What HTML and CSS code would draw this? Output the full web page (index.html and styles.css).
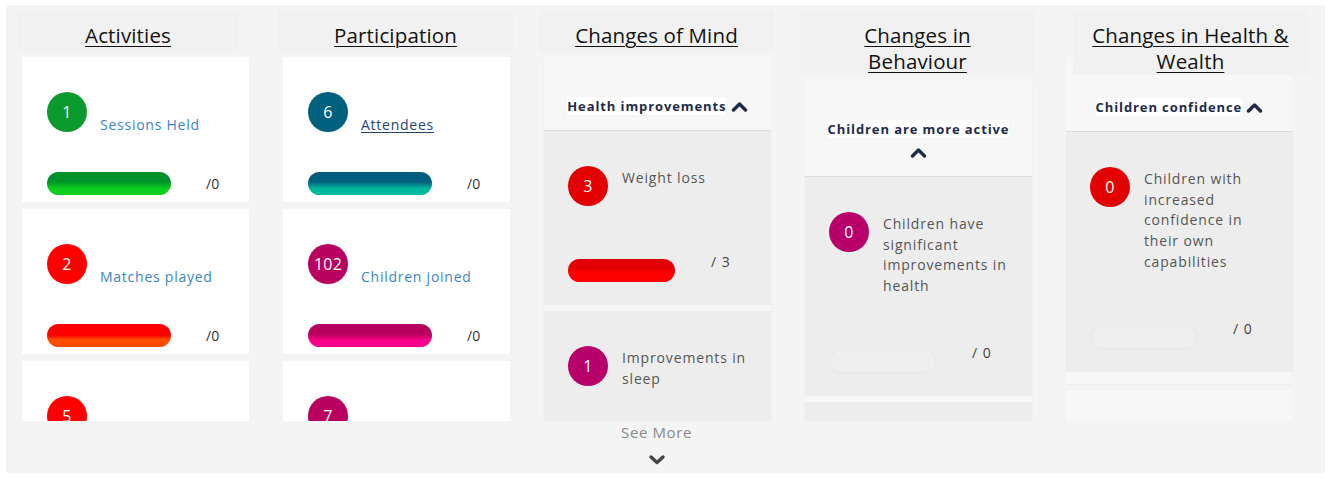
FILE: index.html
```html
<!DOCTYPE html>
<html lang="en">
<head>
<meta charset="utf-8">
<title>Outcomes dashboard</title>
<link rel="stylesheet" href="styles.css">
</head>
<body>
<div class="panel">
  <div class="board">

    <section class="col">
      <h2 class="col-title title-narrow"><a href="#">Activities</a></h2>
      <div class="col-body">
        <div class="stat-card">
          <div class="stat-head"><span class="badge c-green">1</span><span class="stat-label">Sessions Held</span></div>
          <div class="stat-foot"><span class="bar bar-green"></span><span class="ratio">/0</span></div>
        </div>
        <div class="stat-card">
          <div class="stat-head"><span class="badge c-red">2</span><span class="stat-label">Matches played</span></div>
          <div class="stat-foot"><span class="bar bar-red"></span><span class="ratio">/0</span></div>
        </div>
        <div class="stat-card">
          <div class="stat-head"><span class="badge c-red">5</span><span class="stat-label"></span></div>
        </div>
      </div>
    </section>

    <section class="col">
      <h2 class="col-title"><a href="#">Participation</a></h2>
      <div class="col-body">
        <div class="stat-card">
          <div class="stat-head"><span class="badge c-teal">6</span><a href="#" class="stat-label stat-link">Attendees</a></div>
          <div class="stat-foot"><span class="bar bar-teal"></span><span class="ratio">/0</span></div>
        </div>
        <div class="stat-card">
          <div class="stat-head"><span class="badge c-magenta">102</span><span class="stat-label">Children joined</span></div>
          <div class="stat-foot"><span class="bar bar-magenta"></span><span class="ratio">/0</span></div>
        </div>
        <div class="stat-card">
          <div class="stat-head"><span class="badge c-magenta">7</span><span class="stat-label"></span></div>
        </div>
      </div>
    </section>

    <section class="col">
      <h2 class="col-title"><a href="#">Changes of Mind</a></h2>
      <div class="col-body">
        <div class="group">
          <div class="group-head"><span class="hl">Health improvements</span> <svg class="chev" width="17" height="11" viewBox="0 0 17 11"><polyline points="2.5,9 8.5,3 14.5,9" fill="none" stroke="currentColor" stroke-width="3.4" stroke-linecap="round" stroke-linejoin="round"/></svg></div>
          <div class="item">
            <div class="item-head"><span class="badge c-crimson">3</span><span class="item-text">Weight loss</span></div>
            <div class="item-foot"><span class="bar bar-crimson"></span><span class="ratio spaced">/ 3</span></div>
          </div>
          <div class="item">
            <div class="item-head"><span class="badge c-plum">1</span><span class="item-text">Improvements in sleep</span></div>
            <div class="item-foot"><span class="bar bar-empty"></span><span class="ratio spaced">/ 0</span></div>
          </div>
        </div>
      </div>
    </section>

    <section class="col">
      <h2 class="col-title title-wrap"><a href="#">Changes in Behaviour</a></h2>
      <div class="col-body">
        <div class="group">
          <div class="group-head"><span class="hl">Children are more active</span> <svg class="chev" width="17" height="11" viewBox="0 0 17 11"><polyline points="2.5,9 8.5,3 14.5,9" fill="none" stroke="currentColor" stroke-width="3.4" stroke-linecap="round" stroke-linejoin="round"/></svg></div>
          <div class="item">
            <div class="item-head"><span class="badge c-plum">0</span><span class="item-text">Children have significant improvements in health</span></div>
            <div class="item-foot"><span class="bar bar-empty"></span><span class="ratio spaced">/ 0</span></div>
          </div>
          <div class="item">
            <div class="item-head"><span class="badge c-plum">0</span><span class="item-text"></span></div>
          </div>
        </div>
      </div>
    </section>

    <section class="col col-last">
      <h2 class="col-title title-shift"><a href="#">Changes in Health &amp; Wealth</a></h2>
      <div class="col-body body-raised">
        <div class="group">
          <div class="group-head"><span class="hl">Children confidence</span> <svg class="chev" width="17" height="11" viewBox="0 0 17 11"><polyline points="2.5,9 8.5,3 14.5,9" fill="none" stroke="currentColor" stroke-width="3.4" stroke-linecap="round" stroke-linejoin="round"/></svg></div>
          <div class="item">
            <div class="item-head"><span class="badge c-crimson">0</span><span class="item-text">Children with increased confidence in their own capabilities</span></div>
            <div class="item-foot"><span class="bar bar-empty"></span><span class="ratio spaced">/ 0</span></div>
          </div>
        </div>
        <div class="group">
          <div class="group-head"><span class="hl"></span></div>
        </div>
      </div>
    </section>

    <div class="see-more">
      <span>See More</span>
      <svg class="chev-down" width="18" height="11" viewBox="0 0 18 11"><polyline points="3,3 9,8.5 15,3" fill="none" stroke="currentColor" stroke-width="3.4" stroke-linecap="round" stroke-linejoin="round"/></svg>
    </div>

  </div>
</div>
</body>
</html>
```

FILE: styles.css
```css
* { box-sizing: border-box; }

html, body {
  margin: 0;
  padding: 0;
  background: #ffffff;
}

body {
  font-family: "Open Sans", "Noto Sans", sans-serif;
  color: #333;
}

.panel {
  margin: 5px 5px 6px 6px;
  width: 1319px;
  height: 468px;
  background: #f4f4f4;
  overflow: hidden;
}

.board {
  display: grid;
  grid-template-columns: repeat(5, 235px);
  grid-template-rows: 411px auto;
  column-gap: 26px;
  padding: 5px 0 0 11px;
}

.col {
  display: flex;
  flex-direction: column;
  min-height: 0;
}

.col-title {
  position: relative;
  z-index: 2;
  margin: 0;
  min-height: 42px;
  padding: 12px 6px 1px;
  background: #f1f1f1;
  text-align: center;
  font-weight: 400;
  font-size: 20.5px;
  line-height: 26px;
  letter-spacing: 0.15px;
}

.col-title a {
  color: #111;
  text-decoration: underline;
  text-decoration-thickness: 1px;
  text-underline-offset: 3px;
}

.title-narrow { width: 222px; }

.title-wrap { padding: 12px 38px 1px; }

.title-shift {
  width: 235px;
  margin-left: 12px;
  padding: 12px 12px 1px;
}

.col-body {
  flex: 1;
  min-height: 0;
  overflow: hidden;
  margin-top: 5px;
  padding-left: 5px;
  display: flex;
  flex-direction: column;
  gap: 7px;
}

.body-raised {
  margin-top: -17px;
  gap: 6px;
}

/* --- simple stat cards --- */
.stat-card {
  flex: 0 0 auto;
  width: 227px;
  height: 145px;
  background: #ffffff;
  padding: 35px 0 0 25px;
}

.stat-head {
  display: flex;
  align-items: flex-end;
}

.badge {
  flex: 0 0 40px;
  width: 40px;
  height: 40px;
  border-radius: 50%;
  display: flex;
  align-items: center;
  justify-content: center;
  color: #fff;
  font-size: 16px;
  letter-spacing: 0.2px;
}

.stat-label {
  margin-left: 13px;
  margin-bottom: -2px;
  font-size: 14px;
  line-height: 18px;
  letter-spacing: 0.75px;
  color: #3b86c6;
  text-decoration: none;
}

.stat-link {
  color: #22466f;
  text-decoration: underline;
  text-underline-offset: 2px;
}

.stat-foot {
  display: flex;
  align-items: center;
  margin-top: 40px;
}

.bar {
  display: block;
  width: 124px;
  height: 23px;
  border-radius: 12px;
}

.ratio {
  margin-left: 35px;
  font-size: 14px;
  line-height: 20px;
  color: #333;
}

.c-green { background: #0b9a2d; }
.c-teal { background: #00607e; }
.c-red { background: #ff0000; }
.c-magenta { background: #b8005f; }
.c-crimson { background: #e20000; }
.c-plum { background: #b8006a; }

.bar-green { background: linear-gradient(to bottom, #00912a 0%, #00932a 42%, #0ccd20 72%, #10d022 100%); }
.bar-teal { background: linear-gradient(to bottom, #005c7d 0%, #005f7f 42%, #00b59a 72%, #00bb9c 100%); }
.bar-red { background: linear-gradient(to bottom, #ff0000 0%, #ff0000 50%, #ff4a00 66%, #ff4d00 100%); }
.bar-magenta { background: linear-gradient(to bottom, #b5005d 0%, #b8005f 45%, #fa008a 70%, #ff0090 100%); }
.bar-crimson { background: linear-gradient(to bottom, #e00000 0%, #e40000 40%, #ff0000 65%, #ff0000 100%); }
.bar-empty {
  background: #efefef;
  border: 1px solid #e8e8e8;
}

/* --- grouped outcome cards --- */
.group {
  flex: 0 0 auto;
  width: 227px;
  background: #f7f7f7;
  padding-bottom: 12px;
  box-shadow: 0 1px 2px rgba(0, 0, 0, 0.04);
}

.group-head {
  padding: 38px 18px 12px;
  min-height: 73px;
  border-bottom: 1px solid #dcdcdc;
  text-align: center;
  font-size: 13px;
  font-weight: 700;
  line-height: 23px;
  letter-spacing: 0.9px;
  color: #1e2b48;
}

.hl { background: #ffffff; }

.chev {
  vertical-align: -1px;
  color: #1e2b48;
}

.item {
  background: #ededed;
  padding: 35px 20px 23px 24px;
}

.item + .item { margin-top: 6px; }

.item-head {
  display: flex;
  align-items: flex-start;
}

.item-text {
  flex: 0 0 128px;
  margin-left: 14px;
  margin-top: 2px;
  font-size: 14px;
  line-height: 20.7px;
  letter-spacing: 0.85px;
  color: #555;
}

.item-foot {
  display: flex;
  align-items: flex-start;
  margin-top: 53px;
}

.item-foot .bar { width: 107px; }

.item-foot .ratio {
  margin-left: 36px;
  margin-top: -7px;
}

.spaced { letter-spacing: 1px; color: #444; }

/* --- see more --- */
.see-more {
  grid-column: 3;
  grid-row: 2;
  display: flex;
  flex-direction: column;
  align-items: center;
  padding-top: 1px;
  color: #8a8a8a;
  font-size: 15px;
  line-height: 20px;
  letter-spacing: 0.6px;
}

.chev-down {
  margin-top: 12px;
  color: #444;
}
```
